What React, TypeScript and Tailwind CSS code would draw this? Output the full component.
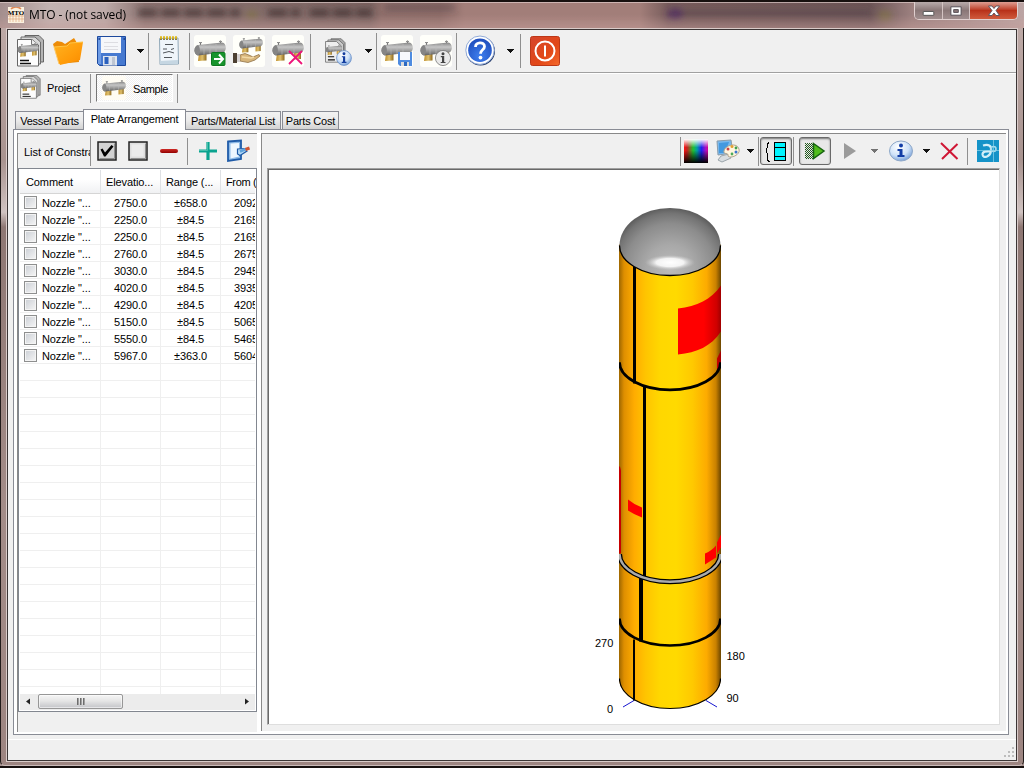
import React, { ReactNode } from "react";

const F = "font-['Liberation_Sans',Arial,sans-serif]";

const Sep = ({ className = "" }: { className?: string }) => (
  <span className={`w-px shrink-0 bg-[#8f8f8f] ${className}`} />
);

const Arrow = ({ className = "", color = "#111" }: { className?: string; color?: string }) => (
  <svg className={`h-1 w-[7px] shrink-0 ${className}`} viewBox="0 0 7 4" shapeRendering="crispEdges">
    <path d="M0 0H7L4 4H3Z" fill={color} />
  </svg>
);

const Defs = () => (
  <svg className="absolute h-0 w-0">
    <defs>
      <linearGradient id="metal" x1="0" y1="0" x2="0" y2="1">
        <stop offset="0" stopColor="#858585" />
        <stop offset=".35" stopColor="#c6c6c6" />
        <stop offset=".65" stopColor="#999" />
        <stop offset="1" stopColor="#606060" />
      </linearGradient>
      <linearGradient id="gold" x1="0" x2="1">
        <stop offset="0" stopColor="#c0902c" />
        <stop offset=".5" stopColor="#dfc06e" />
        <stop offset="1" stopColor="#8f6a1e" />
      </linearGradient>
      <linearGradient id="orange" x1="0" y1="0" x2="1" y2="1">
        <stop offset="0" stopColor="#ffb321" />
        <stop offset=".6" stopColor="#ff9c0a" />
        <stop offset="1" stopColor="#f98b00" />
      </linearGradient>
      <radialGradient id="glass" cx=".4" cy=".3" r=".8">
        <stop offset="0" stopColor="#ffffff" />
        <stop offset=".55" stopColor="#cfe2f8" />
        <stop offset="1" stopColor="#5f8ed0" />
      </radialGradient>
      <radialGradient id="blueBall" cx=".5" cy=".75" r=".8">
        <stop offset="0" stopColor="#3f7fee" />
        <stop offset="1" stopColor="#1c49b8" />
      </radialGradient>
      <linearGradient id="red" x1="0" y1="0" x2="1" y2="1">
        <stop offset="0" stopColor="#d5452c" />
        <stop offset=".6" stopColor="#e24818" />
        <stop offset="1" stopColor="#f56a2c" />
      </linearGradient>
    </defs>
  </svg>
);

const VesselShape = () => (
  <g>
    <path d="M5 18H12.500V25.500L4 26Z" fill="url(#gold)" />
    <path d="M22 16H29V24L22 24.500Z" fill="url(#gold)" />
    <path d="M6.500 7V11M26.500 5.500V9" stroke="#777" strokeWidth="1.200" />
    <path d="M5 7.500h3M25 6.500h3" stroke="#8e8e8e" strokeWidth="1" />
    <path d="M4 10 28 7.500C33 8 33 16.500 29 17.500L4 20.500C-.8 19.500-.8 11 4 10Z" fill="url(#metal)" />
    <path d="M4 10C-.8 11-.8 19.500 4 20.500C6.500 18.500 6.500 12 4 10Z" fill="#858585" />
    <path d="M10 10V19.500M16 9.500V19M22 8.800V18.200" stroke="#bdbdbd" strokeWidth=".6" />
  </g>
);

const Vessel = ({ children, className = "" }: { children?: ReactNode; className?: string }) => (
  <svg className={`h-8 w-8 shrink-0 ${className}`} viewBox="0 0 32 32">
    <rect width="32" height="32" rx="3" fill="#fffffa" />
    <VesselShape />
    {children}
  </svg>
);

const Sheets = ({ className = "" }: { className?: string }) => (
  <svg className={`shrink-0 ${className}`} viewBox="0 0 32 32">
    <path d="M11 .5H25L29.500 5V27H11Z" fill="#b4b4b4" stroke="#666" />
    <path d="M7 2H21L26.500 7V29H7Z" fill="#d8d8d8" stroke="#6c6c6c" />
    <path d="M3.500 4.500H18L24.500 10V31H3.500Z" fill="#fdfdfd" stroke="#666" />
    <path d="M17.500 4.500V9.500H24" fill="#ececec" stroke="#777" />
    <g transform="translate(3.500 4.500) scale(.66)"><VesselShape /></g>
    <path d="M6 25.500H15M6 28.500H17" stroke="#111" strokeWidth="1.300" />
  </svg>
);

const Floppy = () => (
  <svg className="ml-3 h-8 w-8 shrink-0" viewBox="0 0 32 32">
    <path d="M1.500 1.500H29.500V30.500H3.500L1.500 28.500Z" fill="#4679d0" stroke="#1d499d" />
    <rect x="2" y="2" width="3" height="27" fill="#6d9be5" />
    <rect x="5" y="2" width="20" height="16" fill="#f6f7fa" />
    <path d="M8 7.500H22M8 11.500H22M8 14.500H22" stroke="#dddde2" />
    <rect x="7" y="21" width="14" height="9.500" fill="#dfe5ee" />
    <rect x="8.500" y="22" width="4" height="7" fill="#2b61bd" />
    <path d="M16 22H19V30H16Z" fill="#bdc5d2" />
    <path d="M2.500 4H4M27.500 4H29" stroke="#173a83" strokeWidth="1.500" />
  </svg>
);

const InfoBall = ({ x, y, r, gray = false }: { x: number; y: number; r: number; gray?: boolean }) => (
  <g transform={`translate(${x} ${y}) scale(${r / 8})`}>
    <circle r="7.600" fill={gray ? "#e9e9e9" : "url(#glass)"} stroke={gray ? "#777" : "#6b90c8"} strokeWidth=".8" />
    <circle cy="-4.300" r="1.500" fill={gray ? "#444" : "#123c9f"} />
    <path d="M-2.200-1.900H1.200V3.900H2.500V5H-2.300V3.900H-1V-.8H-2.200Z" fill={gray ? "#444" : "#123c9f"} />
  </g>
);

const MainToolbar = () => (
  <div className="flex h-[43px] shrink-0 items-center border-b border-[#a0a0a0] pl-1.5">
    <Sheets className="h-8 w-8" />
    <svg className="ml-1.5 h-8 w-8 shrink-0" viewBox="0 0 32 32">
      <path d="M1 9 5 6 10 7 13 9 22 3 25 8 27 27 7 29Z" fill="#ed8c07" />
      <path d="M2 12 15 11 18 8 31 7 28 25 8 30Z" fill="url(#orange)" />
      <path d="M2 12 15 11 18 8 31 7" stroke="#ffc546" fill="none" />
      <path d="M7 29 2 12" stroke="#ffcb68" fill="none" />
    </svg>
    <Floppy />
    <Arrow className="ml-[9px]" />
    <Sep className="ml-1 h-[37px]" />
    <svg className="ml-1 h-8 w-8 shrink-0" viewBox="0 0 32 32">
      <path d="M6.500 3.500 25 3 25.500 29 7 29.500Z" fill="#eff5fa" stroke="#92a9b9" />
      <path d="M7 26 25 25V29L7 29.500Z" fill="#c5d6e2" />
      <path d="M7 4H25" stroke="#655319" strokeWidth="1.500" strokeDasharray="2 1" />
      <path d="M7 2.500H25" stroke="#deb91e" strokeWidth="2.500" strokeDasharray="2 1" />
      <path d="M12 9.500H20M10 14H14M10 18 16 16.500 21 18M11 22.500H19M18 14.500 21 13.500" stroke="#52575c" fill="none" />
    </svg>
    <Sep className="ml-1 h-[37px]" />
    <Vessel className="ml-1">
      <rect x="17.500" y="17.500" width="13.500" height="13" rx="1" fill="#17942c" stroke="#0e7720" />
      <path d="M20 24H29M25 19.500 29 24 25 28.500" stroke="white" strokeWidth="2" fill="none" />
    </Vessel>
    <svg className="ml-[7px] h-8 w-8 shrink-0" viewBox="0 0 32 32">
      <rect width="32" height="32" rx="3" fill="#fffffa" />
      <g transform="translate(6 -2) scale(.75)"><VesselShape /></g>
      <path d="M7 20 12 18.500 17 20.500 20 22 26 19.500 27 21 22 25 15 27.500 7 26Z" fill="#d7b57b" stroke="#8f7146" strokeWidth=".8" />
      <path d="M9 22 18 23 21 22" stroke="#f2d9a5" strokeWidth="1.500" fill="none" />
      <path d="M0 18H4V28H0Z" fill="#4d4032" /><path d="M4 19H7V27H4Z" fill="#d8d3d2" />
    </svg>
    <Vessel className="ml-[7px]">
      <path d="M17 16 30 29M30 16 17 29" stroke="#ed147a" strokeWidth="1.800" />
    </Vessel>
    <Sep className="ml-1.5 h-[34px]" />
    <svg className="ml-3 h-8 w-8 shrink-0" viewBox="0 0 32 32">
      <g transform="translate(1 3) scale(.78)">
        <path d="M9 1H22L27 6V25H9Z" fill="#aaa" stroke="#666" />
        <path d="M5 2.500H19L25 8V28H5Z" fill="#ccc" stroke="#666" />
        <path d="M2 4.500H16L22 10V31H2Z" fill="#eee" stroke="#666" />
        <g transform="translate(2 5) scale(.65)"><VesselShape /></g>
        <path d="M5 24H13M5 28H14" stroke="#111" strokeWidth="1.500" />
      </g>
      <InfoBall x={21} y={23} r={7.8} />
    </svg>
    <Arrow className="ml-[10px]" />
    <Sep className="ml-1 h-[37px]" />
    <Vessel className="ml-1">
      <path d="M17 17H31V31H19L17 29Z" fill="#4e8be0" />
      <path d="M19 17H29V25H19Z" fill="#f7f8fc" /><path d="M20 27H28V31H20Z" fill="#ddd" /><path d="M23 27H26V31H23Z" fill="#2d6ac2" />
    </Vessel>
    <Vessel className="ml-[7px]"><InfoBall x={23} y={23} r={8} gray /></Vessel>
    <Sep className="ml-1 h-[37px]" />
    <svg className="ml-[7px] h-8 w-8 shrink-0" viewBox="0 0 32 32">
      <circle cx="16.500" cy="16" r="14.500" fill="#263d6d" />
      <circle cx="16" cy="15.200" r="14.200" fill="#fff" stroke="#91abd9" />
      <circle cx="16" cy="15.200" r="11.800" fill="url(#blueBall)" />
      <path d="M11.500 12C11.500 6.500 20.500 6.500 20.500 11.500C20.500 15 16.500 14.500 16.500 18.700" stroke="white" strokeWidth="2.800" fill="none" />
      <circle cx="16.500" cy="22.600" r="1.900" fill="white" />
    </svg>
    <Arrow className="ml-[11px]" />
    <Sep className="ml-1.5 h-[34px]" />
    <svg className="ml-2 h-8 w-8 shrink-0" viewBox="0 0 32 32">
      <rect x="1.500" y="1.500" width="29" height="29" rx="2" fill="url(#red)" stroke="#bd3717" />
      <circle cx="16" cy="16" r="9.500" stroke="white" strokeWidth="2" fill="none" />
      <path d="M16 10.500V21.500" stroke="white" strokeWidth="2" />
    </svg>
  </div>
);

const CaptionButtons = () => (
  <div className="mr-1.5 flex h-[18px] w-[104px] shrink-0 overflow-hidden rounded-b-[5px] border border-t-0 border-[#e0d0cf]">
    <div className="flex w-7 items-center justify-center border-r border-[#d4c4c3] bg-linear-to-b from-[#b8abab] via-[#8a7777] via-50% to-[#a08e8e]">
      <svg className="h-4 w-7" viewBox="0 0 28 16"><rect x="8.500" y="8.500" width="11" height="4" rx=".5" fill="#fff" stroke="#555" /></svg>
    </div>
    <div className="flex w-[27px] items-center justify-center border-r border-[#d4c4c3] bg-linear-to-b from-[#b8abab] via-[#8a7777] via-50% to-[#a08e8e]">
      <svg className="h-4 w-7" viewBox="0 0 28 16"><path fillRule="evenodd" d="M8.500 3.500H19.500V12.500H8.500ZM11.500 6.500V9.500H16.500V6.500Z" fill="#fff" stroke="#514b52" /></svg>
    </div>
    <div className="flex flex-1 items-center justify-center bg-linear-to-b from-[#dd9d92] via-[#b83119] via-50% to-[#d05a3c]">
      <svg className="h-4 w-6" viewBox="0 0 24 16"><path d="M6.500 3H10L12 5.500 14 3H17.500L14 7.500 17.500 12.500H14L12 10 10 12.500H6.500L10 7.500Z" fill="#fff" stroke="#55505c" strokeWidth=".9" /></svg>
    </div>
  </div>
);

const TitleBar = () => (
  <div className="relative flex h-7 shrink-0 items-center overflow-hidden border-t-2 border-[#17100f] bg-[#806765]">
    <div className="absolute inset-0 bg-[linear-gradient(90deg,#a38e8d_0px,#c3b3b1_50px,#bdaaa8_105px,#8b7371_145px,#7b6462_370px,#8f6f6b_382px,#8e6d69_440px,#a27e79_465px,#a27e79_640px,#775c5c_668px,#6c5557_870px,#9c807f_912px,#bca5a4_1024px)]" />
    <svg className="absolute inset-0 h-full w-full" viewBox="0 0 1024 26">
      <defs><filter id="soft" x="-20%" y="-100%" width="140%" height="300%"><feGaussianBlur stdDeviation="3" /></filter></defs>
      <g filter="url(#soft)">
        <path d="M138 11H240M268 11H300M310 11H372" stroke="#3f2d2d" strokeWidth="9" strokeDasharray="19 4" opacity=".6" />
        <path d="M385 2H455V9H385ZM680 8H870V14H680Z" fill="#514044" opacity=".4" />
        <ellipse cx="675" cy="12" rx="8" ry="6" fill="#4c2860" opacity=".7" />
        <ellipse cx="885" cy="14" rx="7" ry="6" fill="#827445" opacity=".6" />
        <ellipse cx="252" cy="13" rx="6" ry="5" fill="#827445" opacity=".6" />
      </g>
    </svg>
    <div className="absolute inset-0 border-t border-white/35 bg-linear-to-b from-transparent via-transparent via-45% to-[#c79f9b]/50" />
    <svg className="relative ml-2 h-4 w-4 shrink-0" viewBox="0 0 16 16">
      <rect width="16" height="16" fill="#fbf1df" />
      <path d="M2 6V15M5 7V15M8 7V15M11 7V15M14 7V15M0 9H16M0 12H16" stroke="#dd9e74" strokeWidth=".6" />
      <path d="M3 2C6-.5 10-.5 13 2" stroke="#e08a58" strokeWidth="1.600" fill="none" />
      <text x="8" y="7.500" fontSize="7" fontWeight="bold" textAnchor="middle" fontFamily="Liberation Serif">MTO</text>
    </svg>
    <span className="relative ml-[5px] whitespace-nowrap font-['Open_Sans',sans-serif] text-xs tracking-[-0.08px] text-black">MTO - (not saved)</span>
    <span className="flex-1" />
    <div className="relative self-start"><CaptionButtons /></div>
  </div>
);

const ViewTabs = () => (
  <div className="flex h-[30px] shrink-0 border-t border-white pl-[10px] text-[11px]">
    <Sheets className="mt-px h-6 w-6" />
    <span className="ml-[5px] w-[43px] pt-2 leading-[13px] tracking-[-0.15px]">Project</span>
    <Sep className="h-[29px]" />
    <div className="ml-[5px] flex h-[28px] w-[77px] items-center border border-b-white border-l-[#777] border-r-white border-t-[#777] bg-[#f8f8f8] bg-[repeating-conic-gradient(#ffffff_0_25%,#f0f0f0_0_50%)] bg-size-[2px_2px] pl-[5px]">
      <svg className="h-6 w-6 shrink-0" viewBox="0 0 32 32"><rect width="32" height="32" rx="3" fill="#fffcf3" /><VesselShape /></svg>
      <span className="ml-[7px] pt-0.5 leading-[13px] tracking-[-0.4px]">Sample</span>
    </div>
    <Sep className="ml-1 h-[29px]" />
  </div>
);

const Tab = ({ label, className }: { label: string; className: string }) => (
  <div className={`flex shrink-0 items-center justify-center whitespace-nowrap border border-b-0 border-[#898c95] ${className}`}>{label}</div>
);

const inactive = "h-[18px] bg-linear-to-b from-[#f2f2f2] via-[#ebebeb] via-50% to-[#d2d2d2] pt-px";

const Tabs = () => (
  <div className="ml-[7px] flex h-[26px] shrink-0 items-end text-[11px] tracking-[-0.2px]">
    <Tab label="Vessel Parts" className={`w-[69px] ${inactive}`} />
    <Tab label="Plate Arrangement" className="relative z-10 -mb-px -ml-px h-[21px] w-[103px] bg-white pb-px" />
    <Tab label="Parts/Material List" className={`w-[95px] border-l-0 ${inactive}`} />
    <Tab label="Parts Cost" className={`ml-px w-[57px] ${inactive}`} />
  </div>
);

const elevations = [
  ["2750.0", "±658.0", "2092"],
  ["2250.0", "±84.5", "2165"],
  ["2250.0", "±84.5", "2165"],
  ["2760.0", "±84.5", "2675"],
  ["3030.0", "±84.5", "2945"],
  ["4020.0", "±84.5", "3935"],
  ["4290.0", "±84.5", "4205"],
  ["5150.0", "±84.5", "5065"],
  ["5550.0", "±84.5", "5465"],
  ["5967.0", "±363.0", "5604"],
];

const cols = "grid grid-cols-[81px_60px_60px_35px]";

const ConstraintList = () => (
  <div className="flex h-[544px] w-[239px] flex-col border border-[#828790] bg-white p-px text-[11px] tracking-[-0.1px]">
    <div className={`${cols} h-6 shrink-0 border-b border-[#d5d5d5] bg-linear-to-b from-white via-white via-40% to-[#f0f1f3] leading-[25px]`}>
      <span className="border-r border-[#dfe1e4] pl-1.5">Comment</span>
      <span className="whitespace-nowrap border-r border-[#dfe1e4] pl-[5px]">Elevatio...</span>
      <span className="whitespace-nowrap border-r border-[#dfe1e4] pl-[5px]">Range (...</span>
      <span className="overflow-hidden whitespace-nowrap pl-[5px] tracking-[-0.35px]">From (</span>
    </div>
    <div className="h-[500px] overflow-hidden">
      {Array.from({ length: 30 }, (_, i) => {
        const r = elevations[i];
        return (
          <div key={i} className={`${cols} h-[17px] border-b border-[#efefef] leading-[18px]`}>
            <span className="flex items-start border-r border-[#efefef] pl-1">
              {r && <i className="mt-0.5 h-[13px] w-[13px] border border-[#8e8f8f] bg-linear-to-br from-[#cbcfd5] to-[#f6f6f6] shadow-[inset_0_0_0_1px_#f4f4f4]" />}
              {r && <span className="ml-[5px] whitespace-nowrap">Nozzle "...</span>}
            </span>
            <span className="border-r border-[#efefef] text-center">{r?.[0]}</span>
            <span className="border-r border-[#efefef] text-center">{r?.[1]}</span>
            <span className="overflow-hidden pl-[13px]">{r?.[2]}</span>
          </div>
        );
      })}
    </div>
    <div className="flex h-4 shrink-0 items-center bg-[#ececec]">
      <svg className="h-4 w-[18px]" viewBox="0 0 18 16"><path d="M10 4.500V10.500L6 7.500Z" fill="#222" /></svg>
      <div className="mb-px flex h-[15px] w-[85px] items-center justify-center gap-px rounded-[2px] border border-[#979797] bg-linear-to-b from-[#f5f5f5] via-[#e6e6e6] via-45% to-[#c3c4c8] shadow-[inset_0_0_0_1px_#ffffff90]">
        <i className="h-[7px] w-0.5 bg-linear-to-r from-[#555] to-[#bbb]" />
        <i className="h-[7px] w-0.5 bg-linear-to-r from-[#555] to-[#bbb]" />
        <i className="h-[7px] w-0.5 bg-linear-to-r from-[#555] to-[#bbb]" />
      </div>
      <span className="flex-1" />
      <svg className="h-4 w-[18px]" viewBox="0 0 18 16"><path d="M8 4.500V10.500L12 7.500Z" fill="#222" /></svg>
    </div>
  </div>
);

const ListToolbar = () => (
  <div className="flex h-[34px] shrink-0 items-center">
    <span className="ml-1.5 w-[66px] overflow-hidden whitespace-nowrap pt-0.5 text-[11px] tracking-[-0.05px]">List of Constraints</span>
    <Sep className="h-[30px]" />
    <svg className="ml-1.5 h-5 w-5 shrink-0" viewBox="0 0 20 20">
      <rect x="1" y="1" width="18" height="18" fill="#d2d2d2" stroke="#222" strokeWidth="1.500" />
      <path d="M2.500 17.500H17.500V2.500" stroke="#8e8e8e" fill="none" />
      <path d="M3.500 8.500 5.500 7.500 8 11.500 14.500 4 16.500 5.500 8.500 15.500 7 15.500Z" fill="#000" />
    </svg>
    <svg className="ml-[11px] h-5 w-5 shrink-0" viewBox="0 0 20 20">
      <rect x="1" y="1" width="18" height="18" fill="#dedede" stroke="#222" strokeWidth="1.500" />
      <path d="M2.500 17.500H17.500V2.500" stroke="#8e8e8e" fill="none" />
      <rect x="3.500" y="3.500" width="12" height="12" fill="#ebebeb" />
    </svg>
    <span className="ml-3 h-1 w-[18px] rounded-full bg-linear-to-b from-[#cf2925] to-[#930000]" />
    <Sep className="ml-[9px] h-[27px]" />
    <svg className="ml-[10px] h-5 w-5 shrink-0" viewBox="0 0 20 20">
      <path d="M10 1V19M1 10H19" stroke="#0aa38f" strokeWidth="3.200" />
      <path d="M9.500 1V9.500H1" stroke="#45c0ac" fill="none" />
    </svg>
    <svg className="ml-2 h-6 w-6 shrink-0" viewBox="0 0 24 24">
      <path d="M2 2.500 15 1.500V20L2 22Z" fill="#8ebbe8" stroke="#1f5ba8" strokeWidth="1.800" />
      <path d="M4.500 4.500 13 4V17.500L4.500 19.500Z" fill="#eef7ff" />
      <path d="M11.500 10 19 9.500 21 12 14 16.500 11.500 15Z" fill="#b9dcf6" stroke="#1f5ba8" strokeWidth="1.200" />
      <path d="M14 12.500 20 10" stroke="#5fa3dc" strokeWidth="2.500" /><path d="M19.500 10.500 23.500 9" stroke="#d25633" strokeWidth="3" />
    </svg>
  </div>
);

const Pressed = ({ className = "", children }: { className?: string; children: ReactNode }) => (
  <div className={`flex h-[28px] w-[32px] shrink-0 items-center justify-center rounded-[3px] border border-[#6a6a6a] bg-[#e8e8e8] shadow-[inset_0_1px_2px_#777] ${className}`}>{children}</div>
);

const ViewToolbar = () => (
  <div className="flex h-[34px] shrink-0 items-center pl-[418px]">
    <Sep className="h-[29px]" />
    <div className="ml-[3px] h-6 w-6 shrink-0 bg-[linear-gradient(to_bottom,#ffffff_0%,transparent_35%,transparent_48%,#000000_100%),linear-gradient(90deg,#ff1010_0%,#c62020_12%,#20c030_38%,#00a0a0_54%,#2020ee_73%,#b010c0_92%,#d00090_100%)]" />
    <svg className="ml-2 h-6 w-6 shrink-0" viewBox="0 0 24 24">
      <path d="M1 2 15 1 17 14 2 16Z" fill="#78b8ed" stroke="#8c9ca9" />
      <path d="M3 4 13 3 9 14H3Z" fill="#4499df" />
      <path d="M5 17 13 15 15 19 6 23 2 21Z" fill="#d8dde0" stroke="#9ba5ab" />
      <path d="M8 12C9 6 21 3 23 10C25 16 14 20 12 17C13 13 7 16 8 12Z" fill="#fff6df" stroke="#b1a58f" />
      <circle cx="12" cy="10" r="1.500" fill="#cb4444" /><circle cx="16" cy="7.500" r="1.500" fill="#e4a030" /><circle cx="20" cy="9" r="1.400" fill="#40a050" /><circle cx="20" cy="13" r="1.500" fill="#3876cf" /><circle cx="16" cy="15" r="1.400" fill="#4caa58" />
    </svg>
    <Arrow className="ml-[7px]" />
    <Sep className="ml-1 h-[29px]" />
    <Pressed className="ml-px">
      <svg className="h-6 w-7 shrink-0" viewBox="0 0 28 24" shapeRendering="crispEdges">
        <path d="M7 3H6V4H5V9L4 12 5 14V21H6V22H8" fill="none" stroke="black" />
        <path d="M12.500 3.500H23.500V21.500H12.500Z" fill="#00f5ff" stroke="#000" />
        <path d="M13 8.500H23M13 17.500H23" stroke="#000" />
      </svg>
    </Pressed>
    <Sep className="ml-px h-[29px]" />
    <Pressed className="ml-[5px]">
      <svg className="h-5 w-6 shrink-0" viewBox="0 0 24 20">
        <defs><pattern id="dots" width="2" height="2" patternUnits="userSpaceOnUse"><path d="M0 0H1V1H0ZM1 1H2V2H1Z" fill="#245b1d" /></pattern></defs>
        <rect x="2" y="2" width="8" height="16" fill="url(#dots)" />
        <path d="M10.500 2.500 21 10 10.500 17.500Z" fill="#50bd1b" stroke="#176411" strokeWidth="1.500" />
      </svg>
    </Pressed>
    <svg className="ml-3 h-5 w-[14px] shrink-0" viewBox="0 0 14 20"><path d="M1 2 13 10 1 18Z" fill="#9b9b9b" /></svg>
    <Arrow className="ml-[14px]" color="#737373" />
    <svg className="ml-[11px] h-6 w-6 shrink-0" viewBox="0 0 24 24">
      <ellipse cx="12" cy="12" rx="11.500" ry="10" fill="url(#glass)" stroke="#8fa8c8" />
      <circle cx="12" cy="6.500" r="2" fill="#123da6" /><path d="M8.500 10H13.500V16H15.500V18H8.500V16H10.500V12H8.500Z" fill="#123da6" />
    </svg>
    <Arrow className="ml-[10px]" />
    <svg className="ml-[10px] h-5 w-[19px] shrink-0" viewBox="0 0 19 20"><path d="M1 2 17.500 18M17.500 3 2 18" stroke="#cf1735" strokeWidth="2" /></svg>
    <Sep className="ml-2 h-[27px]" />
    <svg className="ml-2 h-6 w-6 shrink-0" viewBox="0 0 24 24">
      <path d="M1 1H23V23H1Z" fill="#1593c8" />
      <path d="M7 6.500C12 5 16 6 15 12C14 18 7 20 6.500 15.500C6.500 11.500 12 12.500 15 12.500" stroke="#d3eff8" strokeWidth="2.200" fill="none" />
      <circle cx="17.500" cy="10" r="2.500" fill="none" stroke="#a6dbec" strokeWidth="1.500" />
      <path d="M1 11.500H23M17.500 1V23" stroke="#8ed6ed" strokeWidth=".7" />
    </svg>
  </div>
);

const seam = (y: number, ry = 30) => `M619.500 ${y}A50.500 ${ry} 0 0 0 720.500 ${y}`;
const domePath = "M619.500 245A50.500 37.500 0 0 1 720.500 245A50.500 30 0 0 1 619.500 245Z";

const VesselView = () => (
  <svg className="block h-full w-full" viewBox="269 170 730 553" fontFamily="Liberation Sans" fontSize="11">
    <defs>
      <clipPath id="shell"><rect x="619" y="200" width="102" height="515" /></clipPath>
      <linearGradient id="body" gradientUnits="userSpaceOnUse" x1="619" x2="721" y1="0" y2="0">
        <stop offset="0" stopColor="#9e6700" /><stop offset=".05" stopColor="#df8f00" /><stop offset=".15" stopColor="#ffac00" />
        <stop offset=".26" stopColor="#ffc400" /><stop offset=".4" stopColor="#ffd700" /><stop offset=".56" stopColor="#ffda00" />
        <stop offset=".72" stopColor="#ffc900" /><stop offset=".86" stopColor="#fdab00" /><stop offset=".95" stopColor="#c98100" /><stop offset="1" stopColor="#6b4600" />
      </linearGradient>
      <linearGradient id="patch" gradientUnits="userSpaceOnUse" x1="678" x2="721" y1="0" y2="0">
        <stop offset=".6" stopColor="#ff0000" /><stop offset=".9" stopColor="#cf0000" /><stop offset="1" stopColor="#a00000" />
      </linearGradient>
      <radialGradient id="dome" gradientUnits="userSpaceOnUse" cx="670" cy="268" r="60">
        <stop offset="0" stopColor="#bcbcbc" /><stop offset=".4" stopColor="#a8a8a8" /><stop offset=".75" stopColor="#8c8c8c" /><stop offset=".92" stopColor="#747474" /><stop offset="1" stopColor="#606060" />
      </radialGradient>
      <radialGradient id="shine"><stop offset="0" stopColor="#fff" /><stop offset=".55" stopColor="#fff" stopOpacity=".85" /><stop offset="1" stopColor="#ccc" stopOpacity="0" /></radialGradient>
    </defs>
    <path d="M623 706.500 634 700M717 706.500 706 700" stroke="#1717d0" />
    <g clipPath="url(#shell)">
      <path d="M619 244H721V678A51 30 0 0 1 619 678Z" fill="url(#body)" />
      <path d={seam(678)} fill="none" stroke="#000" strokeWidth="1.200" />
      <path d="M678 308C697 306 711 299 721 285V331C711 346 697 352 678 354ZM717 358 721 350V367L717 369Z" fill="url(#patch)" />
      <path d="M628 499Q634 504 642 507V517Q634 514 628 510ZM705 553Q712 550 716 545V557L705 564ZM717 542 721 534V547L717 553Z" fill="#f00" />
      <path d="M619 466H620L621 470V553H619Z" fill="#c60000" />
      <path d="M633 264H636V383H633ZM643 386H646V576H643ZM639 577H643V641H639ZM633 639H635V700H633Z" fill="#000" />
      <path d={seam(361.800, 27.500)} stroke="#000" strokeWidth="2.700" fill="none" />
      <path d={seam(553.500, 27.700)} stroke="#000" strokeWidth="5" fill="none" />
      <path d={seam(553.500, 27.700)} stroke="#aaa" strokeWidth="2.400" fill="none" />
      <path d={seam(618, 27)} stroke="#000" strokeWidth="2.700" fill="none" />
    </g>
    <path d={domePath} fill="url(#dome)" />
    <ellipse cx="670" cy="262" rx="25" ry="7.500" fill="url(#shine)" />
    <path d={seam(245)} stroke="#000" strokeWidth="1.300" fill="none" />
    <text x="595" y="646.500">270</text>
    <text x="726.500" y="659.500">180</text>
    <text x="726.500" y="701.500">90</text>
    <text x="607" y="712.500">0</text>
  </svg>
);

export default function App() {
  return (
    <div className={`flex h-[768px] w-[1024px] flex-col overflow-hidden bg-[#a8928f] text-black ${F}`}>
      <Defs />
      <TitleBar />
      <div className="flex h-[738px] shrink-0 rounded-b-[5px] border-x border-b border-x-[#211b1a] border-b-[#c9bab8] bg-[linear-gradient(180deg,#bda9a6_0%,#a8938f_18%,#d0c3c1_25%,#8e7773_27%,#a38c88_65%,#9d8581_100%)] px-[5px]">
        <div className="flex h-[734px] w-[1012px] shrink-0 flex-col border border-[#d9cbc9]">
          <div className="flex h-[732px] flex-col border border-[#3b3535] bg-[#f0f0f0]">
            <MainToolbar />
            <ViewTabs />
            <Tabs />
            <div className="ml-[5px] flex h-[606px] w-[996px] shrink-0 border border-[#898c95] bg-white pl-[3px] pr-[2px] pt-[3px]">
              <div className="flex h-[599px] w-[240px] shrink-0 flex-col border-l border-t border-[#898989] bg-[#f0f0f0]">
                <ListToolbar />
                <ConstraintList />
              </div>
              <div className="ml-1 flex h-[598px] w-[745px] shrink-0 flex-col border-l border-t border-[#898989] bg-[#f0f0f0]">
                <ViewToolbar />
                <div className="ml-[5px] h-[557px] w-[733px] border border-b-[#dedede] border-l-[#a0a0a0] border-r-[#dedede] border-t-[#a0a0a0]">
                  <div className="h-full border-l border-t border-[#696969] bg-white">
                    <VesselView />
                  </div>
                </div>
              </div>
            </div>
            <div className="mt-1 flex flex-1 items-end justify-end border-t border-white">
              <svg className="mb-0.5 mr-px h-3 w-3" viewBox="0 0 12 12" fill="#bdbdbd"><path d="M9 1H11V3H9ZM9 5H11V7H9ZM5 5H7V7H5ZM9 9H11V11H9ZM5 9H7V11H5ZM1 9H3V11H1Z" /></svg>
            </div>
          </div>
        </div>
      </div>
      <div className="flex-1 bg-[#160f0e]" />
    </div>
  );
}
